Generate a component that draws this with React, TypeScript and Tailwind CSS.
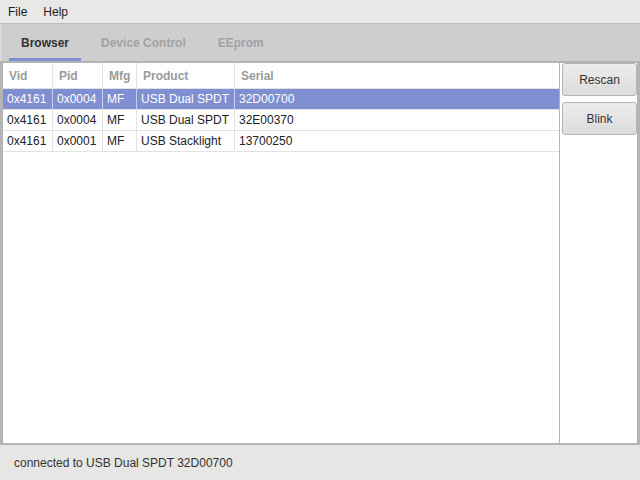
const rows = [
  { vid: '0x4161', pid: '0x0004', mfg: 'MF', product: 'USB Dual SPDT', serial: '32D00700' },
  { vid: '0x4161', pid: '0x0004', mfg: 'MF', product: 'USB Dual SPDT', serial: '32E00370' },
  { vid: '0x4161', pid: '0x0001', mfg: 'MF', product: 'USB Stacklight', serial: '13700250' },
]

const tabs = ['Browser', 'Device Control', 'EEprom']

// column widths in px, last one fills
const cols = ['w-[50px]', 'w-[50px]', 'w-[34px]', 'w-[98px]', 'flex-1']

export default function App() {
  const selected = 0

  return (
    <div className="w-[640px] h-[480px] flex flex-col bg-[#e6e6e4] text-[12px] text-[#222] font-['Liberation_Sans',Arial,sans-serif] overflow-hidden">
      {/* menu bar */}
      <div className="h-[24px] flex items-center gap-[16px] px-[8px] bg-[#e8e8e7] border-b border-[#bdbdbd]">
        <span>File</span>
        <span>Help</span>
      </div>

      {/* tab strip */}
      <div className="h-[37px] flex items-end gap-[8px] pl-[7px] bg-[#cecece] border-l-2 border-[#dadada]">
        {tabs.map((t, i) => (
          <div
            key={t}
            className={
              i === 0
                ? 'h-full flex items-center px-[12px] font-bold text-[#333] border-b-[3px] border-[#7f8fd1] pt-[3px]'
                : 'h-full flex items-center px-[12px] font-bold text-[#a2a2a2] border-b-[3px] border-transparent pt-[3px]'
            }
          >
            {t}
          </div>
        ))}
      </div>

      {/* main area */}
      <div className="flex-1 flex bg-white border-x-[3px] border-b-2 border-t-2 border-[#b4b4b4] min-h-0">
        <div className="flex-1 flex flex-col">
          <div className="h-[26px] flex border-b border-[#e2e2e2] text-[#9a9a9a] font-bold">
            {['Vid', 'Pid', 'Mfg', 'Product', 'Serial'].map((h, i) => (
              <div
                key={h}
                className={`${cols[i]} flex items-center px-[6px] ${i < 4 ? 'border-r border-[#e2e2e2]' : ''}`}
              >
                {h}
              </div>
            ))}
          </div>
          {rows.map((r, ri) => {
            const cells = [r.vid, r.pid, r.mfg, r.product, r.serial]
            const sel = ri === selected
            return (
              <div
                key={r.serial}
                className={
                  sel
                    ? 'h-[21px] flex bg-[#7f8fd1] text-white border-b border-[#e2e2e2]'
                    : 'h-[21px] flex border-b border-[#e2e2e2]'
                }
              >
                {cells.map((c, i) => (
                  <div
                    key={i}
                    className={`${cols[i]} flex items-center px-[4px] ${i < 4 ? (sel ? 'border-r border-[#c8cfee]' : 'border-r border-[#e2e2e2]') : ''}`}
                  >
                    {c}
                  </div>
                ))}
              </div>
            )
          })}
        </div>

        {/* side buttons */}
        <div className="w-[78px] flex flex-col gap-[6px] pl-[2px] border-l border-[#b4b4b4]">
          <button className="h-[33px] rounded-[3px] border border-[#b4b4b4] bg-gradient-to-b from-[#ececec] to-[#dcdcdc] text-[#333] text-[12px]">
            Rescan
          </button>
          <button className="h-[33px] rounded-[3px] border border-[#b4b4b4] bg-gradient-to-b from-[#ececec] to-[#dcdcdc] text-[#333] text-[12px]">
            Blink
          </button>
        </div>
      </div>

      {/* status bar */}
      <div className="h-[35px] flex items-center px-[14px] text-[#333]">
        connected to USB Dual SPDT 32D00700
      </div>
    </div>
  )
}
